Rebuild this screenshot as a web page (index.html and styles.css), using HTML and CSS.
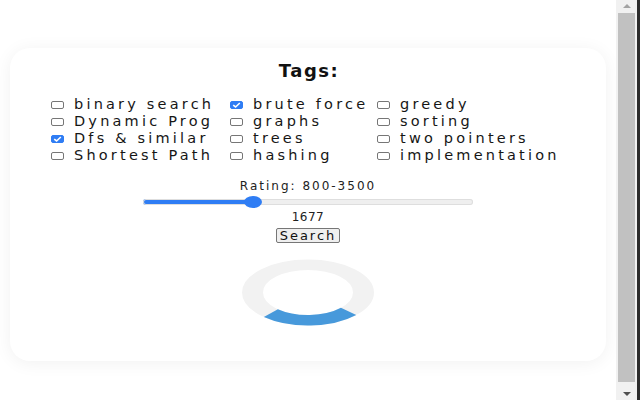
FILE: index.html
```html
<!DOCTYPE html>
<html lang="en">
<head>
<meta charset="utf-8">
<title>Tags</title>
<link rel="stylesheet" href="styles.css">
</head>
<body>
<div class="main">
  <div class="card">
    <h2 class="title">Tags:</h2>
    <div class="tags">
      <label class="tag"><span class="box"></span><span class="txt">binary search</span></label>
      <label class="tag"><span class="box checked"><svg viewBox="0 0 13 8" width="13" height="8"><path d="M3.2 4.1 L5.6 6 L9.8 2" fill="none" stroke="#fff" stroke-width="1.6"/></svg></span><span class="txt">brute force</span></label>
      <label class="tag"><span class="box"></span><span class="txt">greedy</span></label>
      <label class="tag"><span class="box"></span><span class="txt">Dynamic Prog</span></label>
      <label class="tag"><span class="box"></span><span class="txt">graphs</span></label>
      <label class="tag"><span class="box"></span><span class="txt">sorting</span></label>
      <label class="tag"><span class="box checked"><svg viewBox="0 0 13 8" width="13" height="8"><path d="M3.2 4.1 L5.6 6 L9.8 2" fill="none" stroke="#fff" stroke-width="1.6"/></svg></span><span class="txt">Dfs &amp; similar</span></label>
      <label class="tag"><span class="box"></span><span class="txt">trees</span></label>
      <label class="tag"><span class="box"></span><span class="txt">two pointers</span></label>
      <label class="tag"><span class="box"></span><span class="txt">Shortest Path</span></label>
      <label class="tag"><span class="box"></span><span class="txt">hashing</span></label>
      <label class="tag"><span class="box"></span><span class="txt">implementation</span></label>
    </div>
    <div class="rating">Rating: 800-3500</div>
    <input class="slider" type="range" min="800" max="3500" value="1677">
    <div class="value">1677</div>
    <button class="search" type="button">Search</button>
    <svg class="donut" viewBox="0 0 132 134" preserveAspectRatio="none" width="132" height="67">
      <circle cx="66" cy="67" r="55.5" fill="none" stroke="#f2f2f2" stroke-width="21"/>
      <path d="M106.59 104.85 A55.5 55.5 0 0 1 28.86 108.25" fill="none" stroke="#4799db" stroke-width="21"/>
    </svg>
  </div>
</div>
<div class="scrollbar">
  <div class="arrow-area top"><span class="arrow up"></span></div>
  <div class="thumb"></div>
  <div class="arrow-area bottom"><span class="arrow down"></span></div>
</div>
</body>
</html>
```
FILE: styles.css
```css
html, body {
  margin: 0;
  padding: 0;
}
body {
  width: 640px;
  height: 400px;
  overflow: hidden;
  display: flex;
  background: #fff;
  font-family: "DejaVu Sans", sans-serif;
  color: #1c1c1c;
}
.main {
  flex: 1;
  padding: 48px 10px 0;
  border-top: 1px solid #8a8a8a;
  box-sizing: border-box;
  margin-top: -1px;
}
.card {
  background: #fff;
  border-radius: 20px;
  box-shadow: 0 2px 18px rgba(0, 0, 0, 0.06);
  padding: 12px 0 35px;
  display: flex;
  flex-direction: column;
  align-items: center;
}
.title {
  margin: 0;
  font-size: 18px;
  line-height: 22px;
  font-weight: bold;
  letter-spacing: 1.5px;
  padding-left: 2px;
  color: #111;
}
.tags {
  margin-top: 14px;
  display: grid;
  grid-template-columns: 179px 147px 196px;
  grid-auto-rows: 17px;
}
.tag {
  display: flex;
  align-items: center;
  white-space: nowrap;
  font-size: 14.5px;
  letter-spacing: 3.2px;
  line-height: 17px;
  color: #161616;
}
.box {
  width: 13px;
  height: 8px;
  box-sizing: border-box;
  border: 1px solid #767676;
  border-radius: 2px;
  background: #fff;
  margin: 1px 10px 0 4px;
  flex: none;
  display: flex;
}
.box.checked {
  background: #2f7df4;
  border-color: #2f7df4;
}
.box svg {
  margin: -1px;
}
.rating {
  margin-top: 14px;
  font-size: 12px;
  line-height: 16px;
  letter-spacing: 2px;
  color: #222;
}
.slider {
  -webkit-appearance: none;
  appearance: none;
  margin: 2px 0 0;
  width: 330px;
  height: 12px;
  background: transparent;
  padding: 0;
}
.slider::-webkit-slider-runnable-track {
  height: 6px;
  border-radius: 3px;
  background: linear-gradient(to right, #2f7df4 0 34%, #efefef 34% 100%);
  box-shadow: inset 0 0 0 1px #dedede;
}
.slider::-webkit-slider-thumb {
  -webkit-appearance: none;
  appearance: none;
  width: 18px;
  height: 12px;
  border-radius: 50%;
  background: #2f7df4;
  margin-top: -3px;
  border: none;
}
.value {
  margin-top: 2px;
  font-size: 12px;
  line-height: 14px;
  letter-spacing: 0.5px;
  color: #222;
}
.search {
  margin-top: 4px;
  height: 15px;
  padding: 0 3px;
  font-family: "DejaVu Sans", sans-serif;
  font-size: 13px;
  line-height: 12px;
  letter-spacing: 2px;
  color: #111;
  background: #efefef;
  border: 1px solid #767676;
  border-radius: 2px;
}
.donut {
  display: block;
  margin-top: 16px;
}
.scrollbar {
  width: 21px;
  flex: none;
  background: #f1f1f1;
  border-right: 3px solid #2c2c2c;
  display: flex;
  flex-direction: column;
}
.arrow-area {
  display: flex;
  justify-content: center;
}
.arrow-area.top {
  height: 13px;
  padding-top: 4px;
  box-sizing: border-box;
}
.arrow-area.bottom {
  height: 18px;
  padding-top: 10px;
  box-sizing: border-box;
}
.arrow {
  width: 0;
  height: 0;
  border-left: 4px solid transparent;
  border-right: 4px solid transparent;
}
.arrow.up {
  border-bottom: 4px solid #a3a3a3;
}
.arrow.down {
  border-top: 4px solid #505050;
}
.thumb {
  flex: 1;
  margin: 0 2px;
  background: #c1c1c1;
}
```
